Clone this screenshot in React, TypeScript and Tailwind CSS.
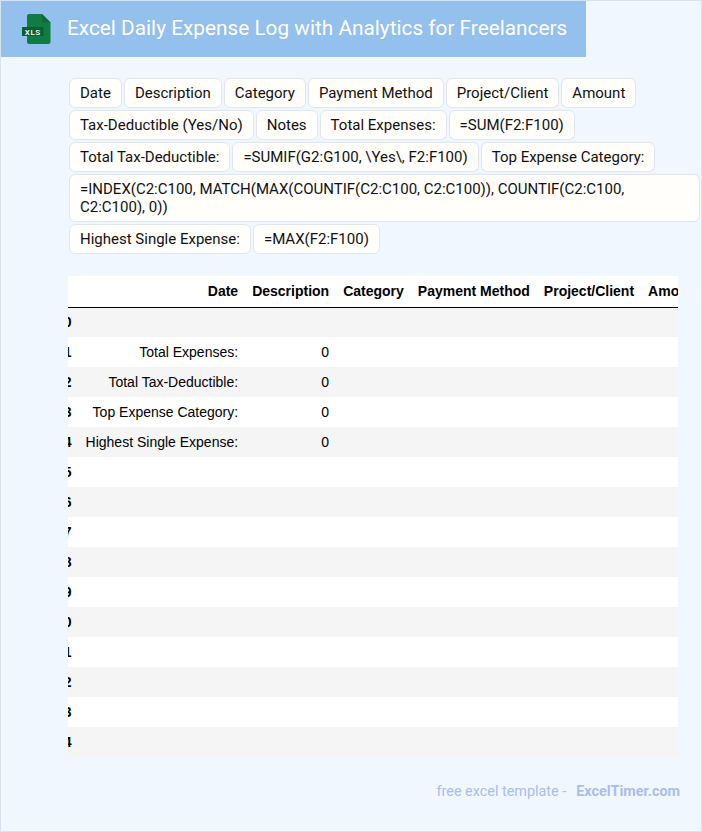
const row1 = ["Date", "Description", "Category", "Payment Method", "Project/Client", "Amount", "Tax-Deductible (Yes/No)", "Notes", "Total Expenses:", "=SUM(F2:F100)", "Total Tax-Deductible:", "=SUMIF(G2:G100, \\Yes\\, F2:F100)", "Top Expense Category:", "=INDEX(C2:C100, MATCH(MAX(COUNTIF(C2:C100, C2:C100)), COUNTIF(C2:C100, C2:C100), 0))", "Highest Single Expense:", "=MAX(F2:F100)"];

const columns = ["Date", "Description", "Category", "Payment Method", "Project/Client", "Amount", "Tax-Deductible (Yes/No)", "Notes"];

const rows: { label?: string; value?: string }[] = [
  {},
  { label: "Total Expenses:", value: "0" },
  { label: "Total Tax-Deductible:", value: "0" },
  { label: "Top Expense Category:", value: "0" },
  { label: "Highest Single Expense:", value: "0" },
  {}, {}, {}, {}, {}, {}, {}, {}, {}, {},
];

function XlsIcon() {
  return (
    <svg width="29" height="30" viewBox="0 0 29 30" className="shrink-0">
      <path d="M7 0 H20 L28.5 8.5 V28 a2 2 0 0 1-2 2 H7 a2 2 0 0 1-2-2 V2 a2 2 0 0 1 2-2 Z" fill="#107c41" />
      <path d="M20 0 L28.5 8.5 H22 a2 2 0 0 1-2-2 Z" fill="#0d6b38" />
      <rect x="0" y="13" width="21.5" height="9" fill="#0c5f32" />
      <text x="10.8" y="20.6" textAnchor="middle" fontSize="8" fontWeight="500" fill="#ffffff" fontFamily="Roboto, sans-serif" letterSpacing="0.6">XLS</text>
    </svg>
  );
}

export default function App() {
  return (
    <div className="w-[702px] h-[832px] border border-[#d8e2f0] bg-[#f1f7ff] font-['Roboto',sans-serif] overflow-hidden">
      <div className="flex items-center w-[585px] h-[56px] bg-[#93c0ed] pl-[21px]">
        <XlsIcon />
        <h1 className="ml-[16px] text-[20.8px] text-white whitespace-nowrap">Excel Daily Expense Log with Analytics for Freelancers</h1>
      </div>

      <div className="flex flex-wrap gap-[2px] pl-[68px] pr-[1px] pt-[21px] text-[15px] leading-[18px] text-[#111]">
        {row1.map(item => (
          <span key={item} className="rounded-md border border-[#e0e6f0] bg-[#fffefb] px-[10px] py-[5px]">
            {item}
          </span>
        ))}
      </div>

      <div className="ml-[67px] mt-[22px] w-[610px] overflow-hidden bg-white">
        <table className="-ml-[19px] border-collapse font-['Liberation_Sans',sans-serif] text-[14px] text-black whitespace-nowrap">
          <thead>
            <tr className="border-b border-black h-[31px]">
              <th className="px-[7px]"></th>
              {columns.map(col => (
                <th key={col} className="px-[7px] pt-[1px] text-right font-bold">{col}</th>
              ))}
            </tr>
          </thead>
          <tbody>
            {rows.map((r, i) => (
              <tr key={i} className={i % 2 === 0 ? "h-[30px] bg-[#f5f5f5]" : "h-[30px] bg-white"}>
                <th className="px-[7px] text-right font-bold">{i}</th>
                <td className="px-[7px] text-right">{r.label}</td>
                <td className="px-[7px] text-right">{r.value}</td>
                {columns.slice(2).map(col => (
                  <td key={col} className="px-[7px]"></td>
                ))}
              </tr>
            ))}
          </tbody>
        </table>
      </div>

      <div className="flex justify-end w-[679px] mt-[24px] text-[14.4px] text-[#a9bdf0]">
        <span>free excel template -</span>
        <span className="ml-[10px] font-bold">ExcelTimer.com</span>
      </div>
    </div>
  );
}
